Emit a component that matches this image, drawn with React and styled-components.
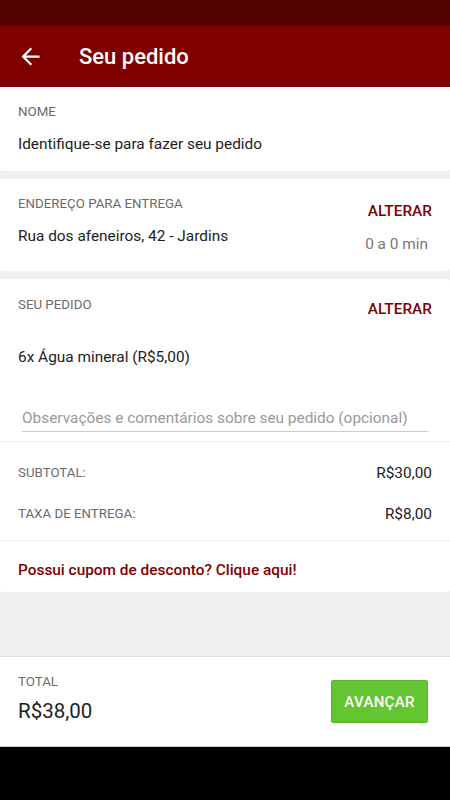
import React from "react";
import styled, { createGlobalStyle } from "styled-components";

const GlobalStyle = createGlobalStyle`
  * { box-sizing: border-box; }
  html, body { margin: 0; padding: 0; }
  body {
    font-family: Roboto, "Liberation Sans", Arial, sans-serif;
    background: #000;
  }
`;

function ArrowBack() {
  return (
    <svg width="27" height="27" viewBox="0 0 24 24" fill="#fff">
      <path d="M20 11H7.83l5.59-5.59L12 4l-8 8 8 8 1.41-1.41L7.83 13H20v-2z" />
    </svg>
  );
}

export default function App() {
  return (
    <>
      <GlobalStyle />
      <Screen>
        <StatusBar />
        <AppBar>
          <BackBtn>
            <ArrowBack />
          </BackBtn>
          <Title>Seu pedido</Title>
        </AppBar>

        <Content>
          <Card>
            <Label>NOME</Label>
            <Value $mt={14}>Identifique-se para fazer seu pedido</Value>
          </Card>

          <Card $gap>
            <Row>
              <Col>
                <Label>ENDEREÇO PARA ENTREGA</Label>
                <Value $mt={14}>Rua dos afeneiros, 42 - Jardins</Value>
              </Col>
              <RightCol>
                <Action>ALTERAR</Action>
                <Eta>0 a 0 min</Eta>
              </RightCol>
            </Row>
          </Card>

          <OrderCard>
            <OrderHead>
              <Row>
                <Label>SEU PEDIDO</Label>
                <Action>ALTERAR</Action>
              </Row>
              <Value $mt={28}>6x Água mineral (R$5,00)</Value>
            </OrderHead>
            <NoteField placeholder="Observações e comentários sobre seu pedido (opcional)" />
            <Totals>
              <TotalRow>
                <Label>SUBTOTAL:</Label>
                <Amount>R$30,00</Amount>
              </TotalRow>
              <TotalRow>
                <Label>TAXA DE ENTREGA:</Label>
                <Amount>R$8,00</Amount>
              </TotalRow>
            </Totals>
            <Coupon>Possui cupom de desconto? Clique aqui!</Coupon>
          </OrderCard>
        </Content>

        <Footer>
          <div>
            <Label>TOTAL</Label>
            <Grand>R$38,00</Grand>
          </div>
          <NextBtn>AVANÇAR</NextBtn>
        </Footer>
        <NavBar />
      </Screen>
    </>
  );
}

const Screen = styled.div`
  width: 450px;
  height: 800px;
  display: flex;
  flex-direction: column;
  background: #f0f0f0;
  overflow: hidden;
`;

const StatusBar = styled.div`
  height: 26px;
  background: #520000;
`;

const AppBar = styled.div`
  height: 61px;
  background: #800000;
  display: flex;
  align-items: center;
  box-shadow: 0 1px 2px rgba(0, 0, 0, 0.2);
`;

const BackBtn = styled.div`
  display: flex;
  margin-left: 17px;
  width: 27px;
  height: 27px;
`;

const Title = styled.h1`
  margin: 0 0 0 35px;
  color: #fff;
  font-size: 22px;
  font-weight: 500;
  line-height: 26px;
`;

const Content = styled.div`
  flex: 1;
  background: #f0f0f0;
`;

const Card = styled.div`
  background: #fff;
  padding: 17px 18px;
  margin-top: ${(p) => (p.$gap ? "8px" : "0")};
  border-radius: 0 0 3px 3px;
`;

const Row = styled.div`
  display: flex;
  justify-content: space-between;
  align-items: flex-start;
`;

const Col = styled.div`
  display: flex;
  flex-direction: column;
`;

const RightCol = styled.div`
  display: flex;
  flex-direction: column;
  align-items: flex-end;
  padding-top: 3px;
`;

const Label = styled.div`
  font-size: 13.3px;
  line-height: 16px;
  color: #6b6b6b;
`;

const Value = styled.div`
  margin-top: ${(p) => p.$mt}px;
  font-size: 15.4px;
  line-height: 20px;
  color: #222;
`;

const Action = styled.div`
  font-size: 15.4px;
  font-weight: 500;
  line-height: 20px;
  color: #800000;
  margin-top: 2px;
`;

const Eta = styled.div`
  margin-top: 13px;
  margin-right: 4px;
  font-size: 15.4px;
  line-height: 20px;
  color: #777;
`;

const OrderCard = styled.div`
  background: #fff;
  margin-top: 8px;
  border-radius: 3px;
`;

const OrderHead = styled.div`
  padding: 18px 18px 0;
`;

const NoteField = styled.input`
  display: block;
  width: 406px;
  margin: 37px 22px 9px;
  padding: 4px 0 3px;
  border: none;
  border-bottom: 1px solid #ccc;
  font-family: inherit;
  font-size: 15.4px;
  line-height: 20px;
  outline: none;
  background: transparent;
  &::placeholder {
    color: #999;
  }
`;

const Totals = styled.div`
  border-top: 1px solid #eee;
  padding: 21px 18px 16px;
  display: flex;
  flex-direction: column;
  gap: 21px;
`;

const TotalRow = styled.div`
  display: flex;
  justify-content: space-between;
  align-items: center;
  height: 20px;
`;

const Amount = styled.div`
  font-size: 15.4px;
  color: #222;
`;

const Coupon = styled.div`
  border-top: 1px solid #eee;
  padding: 19px 18px 12px;
  font-size: 15.4px;
  font-weight: 500;
  line-height: 20px;
  color: #800000;
`;

const Footer = styled.div`
  height: 91px;
  background: #fff;
  border-top: 1px solid #ddd;
  border-bottom: 1px solid #ccc;
  padding: 17px 22px 0 18px;
  display: flex;
  justify-content: space-between;
  align-items: flex-start;
`;

const Grand = styled.div`
  margin-top: 9px;
  font-size: 20.5px;
  line-height: 24px;
  color: #222;
`;

const NextBtn = styled.button`
  margin-top: 6px;
  width: 97px;
  height: 43px;
  border: 1px solid #5bb52c;
  border-radius: 2px;
  background: #64c532;
  color: #fff;
  font-family: inherit;
  font-size: 15px;
  font-weight: 500;
  letter-spacing: 0.3px;
  cursor: pointer;
`;

const NavBar = styled.div`
  height: 53px;
  background: #000;
`;
